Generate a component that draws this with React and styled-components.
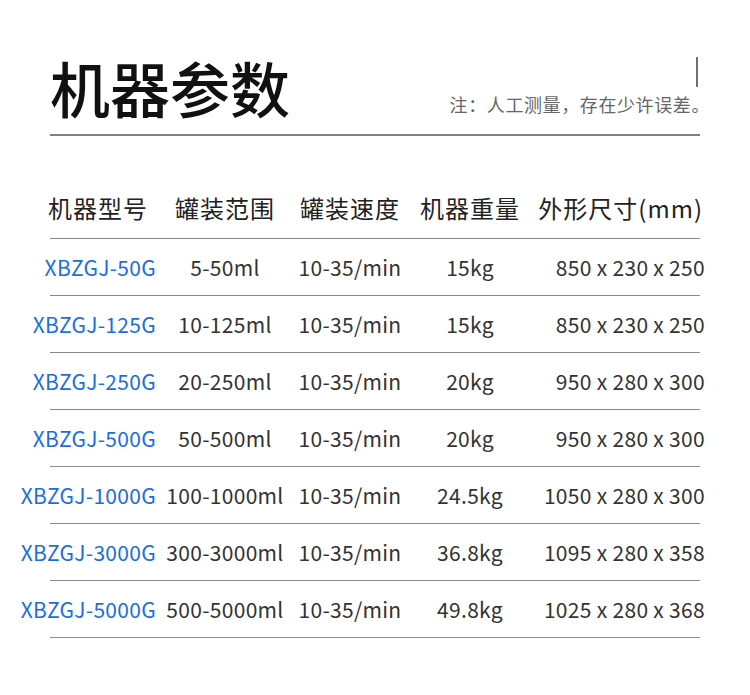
import React from 'react';
import styled, { createGlobalStyle } from 'styled-components';

const GlobalStyle = createGlobalStyle`
  html, body {
    margin: 0;
    padding: 0;
    background: #ffffff;
  }
  body {
    font-family: "Noto Sans CJK SC", "Noto Sans", sans-serif;
    color: #333333;
  }
`;

const Page = styled.div`
  width: 750px;
  height: 695px;
  padding: 0 50px;
  box-sizing: border-box;
  background: #ffffff;
  overflow: hidden;
`;

const Header = styled.div`
  display: flex;
  justify-content: space-between;
  align-items: flex-start;
  padding-top: 57px;
`;

const Title = styled.h1`
  margin: 0;
  font-size: 60px;
  line-height: 60px;
  font-weight: 500;
  color: #111111;
`;

const NoteBox = styled.div`
  display: flex;
  flex-direction: column;
  align-items: flex-end;
`;

const Bar = styled.div`
  width: 2px;
  height: 30px;
  margin-right: 2px;
  background: #707070;
`;

const Note = styled.div`
  margin-top: 8px;
  margin-right: -10px;
  font-size: 18px;
  line-height: 18px;
  letter-spacing: 0.6px;
  color: #666666;
`;

const Divider = styled.div`
  height: 2px;
  margin-top: 17px;
  background: #808080;
`;

const Row = styled.div`
  border-bottom: 1px solid #8a8a8a;
  padding: ${p => (p.$head ? '54px 0 18px' : '0')};
  height: ${p => (p.$head ? '30px' : '56px')};
  box-sizing: content-box;
`;

const Cells = styled.div`
  display: grid;
  grid-template-columns: 140px 130px 120px 120px 175px;
  align-items: center;
  height: 100%;
  margin: 0 -5px 0 -30px;
`;

const Cell = styled.div`
  justify-self: ${p => p.$align};
  padding-right: ${p => p.$pad || 0}px;
  white-space: nowrap;
  font-size: ${p => (p.$head ? 24 : 21)}px;
  letter-spacing: ${p => (p.$head ? 1 : 0.3)}px;
  color: ${p => (p.$blue ? '#1a6ee0' : p.$head ? '#222222' : '#333333')};
`;

const heads = ['机器型号', '罐装范围', '罐装速度', '机器重量', '外形尺寸(mm)'];

const rows = [
  ['XBZGJ-50G', '5-50ml', '10-35/min', '15kg', '850 x 230 x 250'],
  ['XBZGJ-125G', '10-125ml', '10-35/min', '15kg', '850 x 230 x 250'],
  ['XBZGJ-250G', '20-250ml', '10-35/min', '20kg', '950 x 280 x 300'],
  ['XBZGJ-500G', '50-500ml', '10-35/min', '20kg', '950 x 280 x 300'],
  ['XBZGJ-1000G', '100-1000ml', '10-35/min', '24.5kg', '1050 x 280 x 300'],
  ['XBZGJ-3000G', '300-3000ml', '10-35/min', '36.8kg', '1095 x 280 x 358'],
  ['XBZGJ-5000G', '500-5000ml', '10-35/min', '49.8kg', '1025 x 280 x 368'],
];

const aligns = ['end', 'center', 'center', 'center', 'end'];

const App = () => {
  return (
    <Page>
      <GlobalStyle />
      <Header>
        <Title>机器参数</Title>
        <NoteBox>
          <Bar />
          <Note>注：人工测量，存在少许误差。</Note>
        </NoteBox>
      </Header>
      <Divider />

      <Row $head>
        <Cells>
          {heads.map((h, i) => (
            <Cell key={h} $head $align={aligns[i]} $pad={i === 0 ? 12 : i === 4 ? 2 : 0}>
              {h}
            </Cell>
          ))}
        </Cells>
      </Row>

      {rows.map(r => (
        <Row key={r[0]}>
          <Cells>
            {r.map((v, i) => (
              <Cell key={i} $align={aligns[i]} $blue={i === 0} $pad={i === 0 ? 4 : 0}>
                {v}
              </Cell>
            ))}
          </Cells>
        </Row>
      ))}
    </Page>
  );
};

export default App;
